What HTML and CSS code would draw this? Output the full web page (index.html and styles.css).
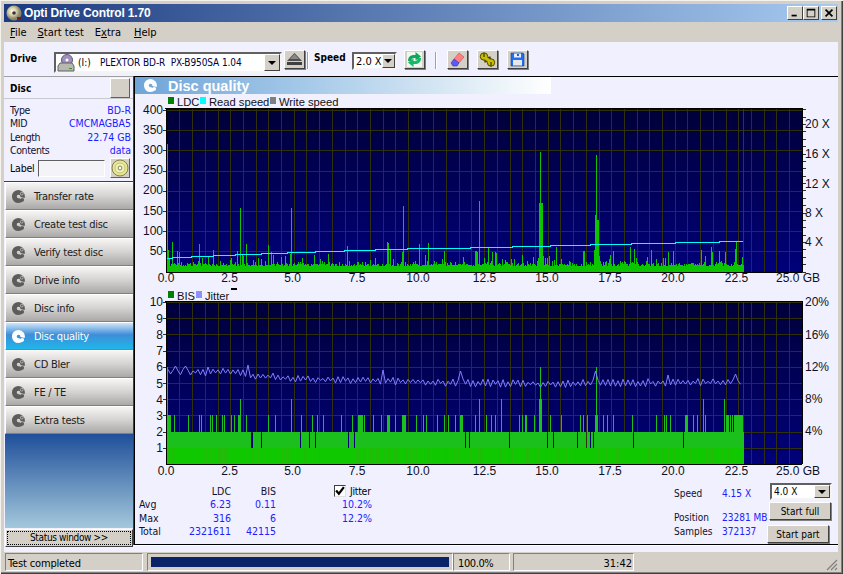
FILE: index.html
```html
<!DOCTYPE html>
<html lang="en">
<head>
<meta charset="utf-8">
<title>Opti Drive Control 1.70</title>
<link rel="stylesheet" href="styles.css">
</head>
<body>
<svg class="defs" width="0" height="0" aria-hidden="true">
  <symbol id="disc" viewBox="0 0 16 16">
    <path fill="currentColor" fill-rule="evenodd" d="M8 1a7 7 0 1 0 0 14c2 0 3.600-.8 4.800-2.100L10 10.500 8.500 9.800a1.900 1.900 0 1 1 1.400-1.400l4.700 1.200A7 7 0 0 0 8 1z"/>
    <circle cx="11.500" cy="5" r="1.500" fill="none" stroke="#f4f4f0" stroke-width=".8" opacity=".7"/>
    <circle cx="12" cy="11.500" r="2" fill="currentColor"/>
  </symbol>
</svg>
<div class="window">
  <header class="titlebar">
    <svg class="app-icon" viewBox="0 0 16 16"><defs><radialGradient id="appdisc" cx=".4" cy=".4"><stop offset="0" stop-color="#fff"/><stop offset=".5" stop-color="#d8d0a8"/><stop offset="1" stop-color="#8a8468"/></radialGradient></defs><circle cx="8" cy="8" r="7.500" fill="url(#appdisc)"/><circle cx="8" cy="8" r="1.800" fill="#333"/><rect x="11" y="12" width="4" height="3" fill="#702020"/></svg>
    <span class="app-name">Opti Drive Control 1.70</span>
    <div class="win-btns">
      <button class="win-btn"><svg viewBox="0 0 16 14"><rect x="4" y="9" width="6" height="2"/></svg></button>
      <button class="win-btn"><svg viewBox="0 0 16 14"><path d="M3 2h10v10H3zM4 4v7h8V4z" fill-rule="evenodd"/></svg></button>
      <button class="win-btn win-close"><svg viewBox="0 0 16 14"><path d="M4 3l8 8M12 3l-8 8" stroke="#000" stroke-width="2" fill="none"/></svg></button>
    </div>
  </header>
  <nav class="menubar">
    <span class="m-file"><u>F</u>ile</span>
    <span class="m-start"><u>S</u>tart test</span>
    <span class="m-extra">E<u>x</u>tra</span>
    <span class="m-help"><u>H</u>elp</span>
  </nav>
  <div class="toolbar">
    <b class="tb-drive">Drive</b>
    <div class="combo drive-combo">
      <svg class="drive-icon" viewBox="0 0 18 18"><circle cx="10" cy="6" r="5.500" fill="#a090c0" stroke="#605878"/><circle cx="10" cy="6" r="1.500" fill="#fff"/><path d="M1 12l2-3h12l2 3v5H1z" fill="#b8b8b0" stroke="#606060"/><rect x="12" y="14" width="3" height="1" fill="#20a020"/></svg>
      <span class="drive-letter">(I:)</span>
      <span class="drive-name">PLEXTOR BD-R  PX-B950SA 1.04</span>
      <span class="combo-arrow"><i></i></span>
    </div>
    <button class="tool-btn eject"><svg viewBox="0 0 17 15"><path d="M8.500 1L16 9H1z" fill="#505050"/><path d="M8.500 2L13 7H4z" fill="#888"/><rect x="1" y="10" width="15" height="3" fill="#404040"/></svg></button>
    <span class="tb-sep s1"></span>
    <b class="tb-speed">Speed</b>
    <div class="combo speed-combo"><span>2.0 X</span><span class="combo-arrow"><i></i></span></div>
    <button class="tool-btn refresh"><svg viewBox="0 0 17 15"><rect x="1" y="0" width="15" height="15" fill="#eef8ee"/><path d="M2 9C2 4.500 5 2.500 9.500 3V0L15 4.500 9.500 8.500V6C7 5.500 5.500 6.500 5 9z" fill="#10a860"/><path d="M15 6c0 4.500-3 6.500-7.500 6v3L2 10.500 7.500 6.500V9c2.500.5 4-.5 4.500-3z" fill="#18b868"/></svg></button>
    <span class="tb-sep s2"></span>
    <button class="tool-btn eraser"><svg viewBox="0 0 17 15"><path d="M10 1l5 4-5 6-5-4z" fill="#ff8080" stroke="#c05050" stroke-width=".6"/><path d="M5 7l5 4-2 3H4L2 11z" fill="#5a5aff" stroke="#3030a0" stroke-width=".6"/></svg></button>
    <button class="tool-btn wrench"><svg viewBox="0 0 17 15"><path d="M5 8.500L12 6.500" stroke="#504800" stroke-width="4.500"/><circle cx="5" cy="4.500" r="3.700" fill="#c8c000" stroke="#504800"/><circle cx="12" cy="10.500" r="3.700" fill="#c8c000" stroke="#504800"/><path d="M6 5.500L11 9.500" stroke="#c8c000" stroke-width="3"/><path d="M5 1v4M12 10v4.500" stroke="#504800" stroke-width="1.400"/></svg></button>
    <button class="tool-btn floppy"><svg viewBox="0 0 17 15"><path d="M2 1h12l1 1v12H2z" fill="#2070f0" stroke="#1040a0" stroke-width=".6"/><rect x="5" y="1.500" width="7" height="4" fill="#e8f0ff"/><rect x="8" y="2" width="2" height="2" fill="#2060d0"/><rect x="4" y="8" width="9" height="5.500" fill="#e8e8e8"/></svg></button>
  </div>
  <div class="workspace">
    <aside class="sidebar">
      <div class="disc-head"><b>Disc</b><button class="plain-btn"></button></div>
      <dl class="disc-info">
        <div><dt>Type</dt><dd>BD-R</dd></div>
        <div><dt>MID</dt><dd>CMCMAGBA5</dd></div>
        <div><dt>Length</dt><dd>22.74 GB</dd></div>
        <div><dt>Contents</dt><dd>data</dd></div>
      </dl>
      <div class="label-row">
        <span>Label</span><span class="label-input"></span>
        <button class="plain-btn disc-btn"><svg viewBox="0 0 18 18"><circle cx="9" cy="9" r="8" fill="#e8e890" stroke="#808050"/><circle cx="9" cy="9" r="5" fill="#f4f4c0" stroke="#c0c070"/><circle cx="9" cy="9" r="2" fill="#fff" stroke="#808050"/></svg></button>
      </div>
      <ul class="nav">
        <li class="nav-btn"><svg class="nav-ic"><use href="#disc"/></svg>Transfer rate</li>
        <li class="nav-btn"><svg class="nav-ic"><use href="#disc"/></svg>Create test disc</li>
        <li class="nav-btn"><svg class="nav-ic"><use href="#disc"/></svg>Verify test disc</li>
        <li class="nav-btn"><svg class="nav-ic"><use href="#disc"/></svg>Drive info</li>
        <li class="nav-btn"><svg class="nav-ic"><use href="#disc"/></svg>Disc info</li>
        <li class="nav-btn active"><svg class="nav-ic"><use href="#disc"/></svg>Disc quality</li>
        <li class="nav-btn"><svg class="nav-ic"><use href="#disc"/></svg>CD Bler</li>
        <li class="nav-btn"><svg class="nav-ic"><use href="#disc"/></svg>FE / TE</li>
        <li class="nav-btn"><svg class="nav-ic"><use href="#disc"/></svg>Extra tests</li>
      </ul>
      <div class="nav-fill"></div>
      <button class="status-btn"><span>Status window &gt;&gt;</span></button>
    </aside>
    <main class="panel">
      <div class="band"><svg class="band-ic"><use href="#disc"/></svg><span>Disc quality</span></div>
      <svg id="chart1" class="chart c1" viewBox="134 95 704 190" width="704" height="190">
        <rect x="168" y="97" width="6" height="7" fill="#008000"/><text class="lg" x="177" y="106">LDC</text>
        <rect x="200" y="97" width="6" height="7" fill="#00ffff"/><text class="lg" x="209" y="106">Read speed</text>
        <rect x="270" y="97" width="6" height="7" fill="#808080"/><text class="lg" x="279" y="106">Write speed</text>
        <g id="plot1"></g>
        <g text-anchor="end">
          <text x="163" y="114">400</text><text x="163" y="134">350</text><text x="163" y="154">300</text><text x="163" y="174">250</text><text x="163" y="194">200</text><text x="163" y="215">150</text><text x="163" y="235">100</text><text x="163" y="255">50</text>
          <text x="820" y="282">25.0 GB</text>
        </g>
        <g text-anchor="middle">
          <text x="166" y="282">0.0</text><text x="229.500" y="282">2.5</text><text x="292.500" y="282">5.0</text><text x="357" y="282">7.5</text><text x="418" y="282">10.0</text><text x="484.500" y="282">12.5</text><text x="547" y="282">15.0</text><text x="610" y="282">17.5</text><text x="673" y="282">20.0</text><text x="736.500" y="282">22.5</text>
        </g>
        <text x="805" y="128">20 X</text><text x="805" y="158">16 X</text><text x="805" y="188">12 X</text><text x="805" y="217">8 X</text><text x="805" y="246">4 X</text>
      </svg>
      <svg id="chart2" class="chart c2" viewBox="134 285 704 195" width="704" height="195">
        <rect x="168" y="291" width="6" height="7" fill="#008000"/><text class="lg" x="177" y="300">BIS</text>
        <rect x="196" y="291" width="6" height="7" fill="#8f8fff"/><text class="lg" x="205" y="300">Jitter</text>
        <rect x="231" y="288" width="6" height="2" fill="#000"/>
        <g id="plot2"></g>
        <g text-anchor="end">
          <text x="163" y="306">10</text><text x="163" y="323">9</text><text x="163" y="339">8</text><text x="163" y="355">7</text><text x="163" y="371">6</text><text x="163" y="388">5</text><text x="163" y="404">4</text><text x="163" y="420">3</text><text x="163" y="436">2</text><text x="163" y="452">1</text>
          <text x="820" y="475">25.0 GB</text>
        </g>
        <g text-anchor="middle">
          <text x="166" y="475">0.0</text><text x="229.500" y="475">2.5</text><text x="292.500" y="475">5.0</text><text x="357" y="475">7.5</text><text x="418" y="475">10.0</text><text x="484.500" y="475">12.5</text><text x="547" y="475">15.0</text><text x="610" y="475">17.5</text><text x="673" y="475">20.0</text><text x="736.500" y="475">22.5</text>
        </g>
        <text x="805" y="306">20%</text><text x="805" y="339">16%</text><text x="805" y="371">12%</text><text x="805" y="403">8%</text><text x="805" y="435">4%</text>
      </svg>
      <section class="stats">
        <div class="stat-table">
          <span></span><span class="hd">LDC</span><span class="hd">BIS</span>
          <span>Avg</span><span class="val">6.23</span><span class="val">0.11</span>
          <span>Max</span><span class="val">316</span><span class="val">6</span>
          <span>Total</span><span class="val">2321611</span><span class="val">42115</span>
        </div>
        <div class="jitter">
          <div class="jit-head"><span class="check"><svg viewBox="0 0 9 9"><path d="M1 4l2.500 3L8 1" fill="none" stroke="#000" stroke-width="2"/></svg></span><span>Jitter</span></div>
          <span class="val">10.2%</span>
          <span class="val">12.2%</span>
        </div>
        <div class="live">
          <span class="live-speed">Speed</span><span class="live-val live-speed">4.15 X</span>
          <span>Position</span><span class="live-val">23281 MB</span>
          <span>Samples</span><span class="live-val">372137</span>
        </div>
        <div class="controls">
          <div class="combo run-combo"><span>4.0 X</span><span class="combo-arrow"><i></i></span></div>
          <button class="run-btn full">Start full</button>
          <button class="run-btn part">Start part</button>
        </div>
      </section>
    </main>
  </div>
  <footer class="statusbar">
    <span class="cell st-text">Test completed</span>
    <span class="cell st-prog"><i></i></span>
    <span class="cell st-pct">100.0%</span>
    <span class="cell st-time">31:42</span>
    <svg class="grip" viewBox="0 0 14 14"><path d="M13 3L3 13M13 7l-6 6M13 11l-2 2" stroke="#808080" stroke-width="1.200" fill="none"/></svg>
  </footer>
</div>
<script src="charts.js"></script>
</body>
</html>
```
FILE: styles.css
```css
* { box-sizing: border-box; }
html, body { margin: 0; padding: 0; }
body { width: 843px; height: 574px; overflow: hidden; font-family: "DejaVu Sans Condensed", "DejaVu Sans", sans-serif; font-stretch: condensed; font-size: 11px; color: #000; }
.defs { position: absolute; }
button { font: inherit; padding: 0; margin: 0; color: inherit; }

.window { width: 843px; height: 574px; padding: 4px 5px 3px 4px; background: #d4d0c8; display: flex; flex-direction: column; box-shadow: inset 1px 1px 0 #f4f2ec, inset -1px -1px 0 #404040, inset -2px -2px 0 #808080; }

.titlebar { height: 18px; flex: none; display: flex; align-items: center; background: linear-gradient(90deg, #1c3a80, #a6caf0); padding-left: 2px; }
.app-icon { width: 16px; height: 16px; margin-right: 2px; }
.app-name { color: #fff; font-family: "Liberation Sans", sans-serif; font-weight: bold; font-size: 12px; letter-spacing: -.15px; }
.win-btns { margin-left: auto; display: flex; margin-right: 1px; }
.win-btn { width: 16px; height: 14px; background: #d4d0c8; border: 1px solid; border-color: #fff #404040 #404040 #fff; display: block; }
.win-btn svg { width: 14px; height: 12px; display: block; }
.win-close { margin-left: 2px; }

.menubar { height: 20px; flex: none; display: flex; align-items: center; font-size: 11px; }
.m-file { margin-left: 6px; }
.m-start { margin-left: 11px; }
.m-extra { margin-left: 11px; }
.m-help { margin-left: 13px; }

.toolbar { height: 34px; flex: none; background: #f0f0ff; display: flex; align-items: flex-start; position: relative; }
.tb-drive { margin: 11px 0 0 6px; width: 44px; font-size: 10px; }
.tb-speed { margin: 10px 0 0 5px; width: 38px; font-size: 10px; }
.combo { background: #fff; border: 2px solid; border-color: #606060 #f4f4f4 #f4f4f4 #606060; display: flex; align-items: center; white-space: pre; position: relative; }
.combo-arrow { margin-left: auto; width: 16px; align-self: stretch; background: #d4d0c8; border: 1px solid; border-color: #fff #404040 #404040 #fff; display: flex; align-items: center; justify-content: center; }
.combo-arrow i { border: 4px solid transparent; border-top: 4px solid #000; border-bottom: 0; }
.drive-combo { width: 228px; height: 21px; margin-top: 10px; font-size: 10px; }
.drive-icon { width: 18px; height: 18px; margin: 0 3px 0 1px; flex: none; }
.drive-letter { width: 22px; }
.drive-name { color: #000040; letter-spacing: -.1px; }
.tool-btn { width: 21px; height: 19px; margin-top: 8px; background: #d4d0c8; border: 1px solid; border-color: #fff #404040 #404040 #fff; box-shadow: 1px 1px 0 #808080; display: block; }
.tool-btn svg { width: 17px; height: 15px; display: block; margin: 1px; }
.eject { margin-left: 2px; }
.tb-sep { width: 2px; height: 17px; margin-top: 10px; background: linear-gradient(90deg, #a0a0a0 50%, #fff 50%); }
.s1 { margin-left: 2px; }
.speed-combo { width: 45px; height: 18px; margin-top: 10px; font-size: 11px; padding-left: 2px; }
.speed-combo .combo-arrow { width: 15px; }
.refresh { margin-left: 7px; }
.s2 { margin-left: 10px; }
.eraser { margin-left: 10px; }
.wrench, .floppy { margin-left: 9px; }

.workspace { height: 476px; flex: none; display: flex; background: #f0f0ff; align-items: flex-start; }
.sidebar { width: 130px; height: 471px; flex: none; display: flex; flex-direction: column; }
.disc-head { height: 23px; flex: none; display: flex; align-items: center; justify-content: space-between; padding: 1px 4px 0 6px; border-top: 1px solid #a0a0a0; border-bottom: 1px solid #c8c8d0; font-size: 10px; }
.plain-btn { width: 20px; height: 20px; background: #d4d0c8; border: 1px solid; border-color: #fff #606060 #606060 #fff; display: block; }
.disc-info { margin: 4px 0 0; padding: 0 3px 0 6px; }
.disc-info div { height: 13.500px; display: flex; justify-content: space-between; align-items: center; }
.disc-info dt { color: #101030; font-size: 10.500px; letter-spacing: -.4px; }
.disc-info dd { margin: 0; color: #2020ff; font-size: 10.500px; }
.label-row { height: 22px; padding: 0 3px 0 6px; display: flex; align-items: center; flex: none; font-size: 10.500px; letter-spacing: -.2px; }
.label-input { width: 67px; height: 17px; margin-left: 3px; background: #f4f4f8; border: 1px solid; border-color: #606060 #fff #fff #606060; }
.disc-btn { margin-left: 5px; }
.disc-btn svg { width: 18px; height: 18px; display: block; }
.nav { list-style: none; margin: 2px 0 0; padding: 0; border-top: 1px solid #404040; }
.nav-btn { height: 28px; margin-left: 1px; display: flex; align-items: center; padding-left: 5px; background: linear-gradient(#f6f5f3, #d8d7d5 45%, #aaa9a7); border: 1px solid; border-color: #fff #808080 #808080 #fff; color: #202020; font-size: 11px; letter-spacing: -.25px; }
.nav-btn.active { background: linear-gradient(#cfe6fa, #3e8ed8 45%, #1fb6ea); color: #fff; }
.nav-ic { width: 15px; height: 15px; margin-right: 8px; color: #5c5c5c; flex: none; }
.active .nav-ic { color: #fff; }
.nav-fill { flex: 1; margin-left: 1px; background: linear-gradient(#1f4f9a, #a4c8dc); border-right: 1px solid #808080; }
.status-btn { height: 18px; margin: 1px 1px 0 1px; background: #d4d0c8; border: 1px solid; border-color: #fff #404040 #404040 #fff; padding: 1px; flex: none; }
.status-btn span { display: block; height: 14px; line-height: 12px; border: 1px dotted #000; font-size: 10px; letter-spacing: -.35px; }

.panel { flex: 1; height: 469px; border-top: 1px solid #000; border-left: 1px solid #000; border-bottom: 1px solid #000; display: flex; flex-direction: column; box-shadow: -1px 0 0 #404040, 0 1px 0 #fff; overflow: hidden; }
.band { width: 416px; height: 17px; flex: none; margin-bottom: 1px; background: linear-gradient(90deg, #6fa5d8, #a4c8e8 40%, #d8e8f4 75%, #fff); color: #fff; display: flex; align-items: center; padding-left: 8px; font-family: "Liberation Sans", sans-serif; font-weight: bold; font-size: 14.500px; }
.band-ic { width: 15px; height: 15px; margin-right: 10px; color: #fff; }
.chart { display: block; flex: none; margin-left: -1px; }
.chart text { font-family: "Liberation Sans", sans-serif; font-size: 12px; fill: #101020; }
.chart text.lg { font-size: 11.200px; }

.stats { flex: 1; display: flex; align-items: flex-start; position: relative; }
.stat-table { display: grid; grid-template-columns: 50px 42px 45px; grid-auto-rows: 13.500px; align-items: center; margin: 4px 0 0 4px; font-size: 10.500px; color: #101030; }
.hd { text-align: right; }
.val { text-align: right; color: #2020ff; }
.jitter { margin: 4px 0 0 58px; width: 38px; display: grid; grid-template-columns: 38px; grid-auto-rows: 13.500px; align-items: center; font-size: 10.500px; }
.jit-head { display: flex; align-items: center; width: 46px; white-space: nowrap; letter-spacing: -.3px; }
.check { width: 12px; height: 12px; background: #fff; border: 1px solid; border-color: #404040 #e0e0e0 #e0e0e0 #404040; margin-right: 4px; display: block; flex: none; }
.check svg { display: block; width: 10px; height: 10px; }
.live { margin: 7px 0 0 auto; display: grid; grid-template-columns: 48px 45px; grid-template-rows: 24px 13.500px 13.500px; font-size: 10px; color: #101030; line-height: 13.500px; white-space: nowrap; }
.live-val { color: #2020ff; }
.controls { margin: 3px 6px 0 0; width: 65px; display: flex; flex-direction: column; font-size: 10px; }
.run-combo { width: 62px; height: 17px; margin-left: 3px; padding-left: 2px; }
.run-btn { height: 18px; background: #d4d0c8; border: 1px solid; border-color: #fff #404040 #404040 #fff; box-shadow: 1px 1px 0 #808080; }
.full { margin: 2px 0 0 2px; width: 62px; }
.part { margin-top: 5px; width: 62px; }

.statusbar { flex: 1; display: flex; align-items: stretch; gap: 0; padding: 1px 0 0 1px; font-size: 11px; position: relative; }
.cell { border: 1px solid; border-color: #808080 #fff #fff #808080; display: flex; align-items: center; height: 18px; padding-top: 2px; }
.st-text { width: 138px; padding-left: 2px; letter-spacing: -.15px; }
.st-prog { width: 306px; margin-left: 4px; padding: 3px 3px; }
.st-prog i { display: block; width: 100%; height: 100%; background: #0a246a; }
.st-pct { width: 57px; padding-left: 4px; letter-spacing: -.4px; }
.st-time { width: 121px; margin-left: 3px; justify-content: flex-end; padding-right: 1px; }
.grip { position: absolute; right: 0; bottom: 0; width: 14px; height: 14px; }
```
FILE: charts.js
```js
(function () {
  var NS = 'http://www.w3.org/2000/svg';
  var seed = 20481;
  function rnd() {
    seed = (seed + 0x6D2B79F5) | 0;
    var t = Math.imul(seed ^ (seed >>> 15), 1 | seed);
    t = (t + Math.imul(t ^ (t >>> 7), 61 | t)) ^ t;
    return ((t ^ (t >>> 14)) >>> 0) / 4294967296;
  }
  function el(parent, name, attrs) {
    var e = document.createElementNS(NS, name);
    for (var k in attrs) e.setAttribute(k, attrs[k]);
    parent.appendChild(e);
    return e;
  }
  function frame(id, gid, top, bottom, hLines) {
    var svg = document.getElementById('chart' + id);
    var g = document.getElementById(gid);
    var defs = el(g, 'defs', {});
    var lg = el(defs, 'linearGradient', { id: 'bg' + id, x1: 0, y1: 0, x2: 0, y2: 1 });
    el(lg, 'stop', { offset: 0, 'stop-color': '#00003a' });
    el(lg, 'stop', { offset: 1, 'stop-color': '#00007a' });
    el(g, 'rect', { x: 166, y: top, width: 636, height: bottom - top, fill: 'url(#bg' + id + ')' });
    var d = '', i;
    for (i = 1; i < 50; i++) { d += 'M' + (Math.round(166.7 + 12.7 * i) + 0.5) + ' ' + top + 'V' + bottom; }
    hLines.forEach(function (y) { d += 'M166 ' + (Math.round(y) + 0.5) + 'H802'; });
    el(g, 'path', { d: d, stroke: '#30300c', 'stroke-width': 1, fill: 'none', 'shape-rendering': 'crispEdges' });
    el(g, 'path', { d: 'M743.500 ' + top + 'V' + bottom, stroke: '#800080', fill: 'none', 'shape-rendering': 'crispEdges' });
    return { svg: svg, g: g };
  }
  function border(g, top, bottom) {
    el(g, 'path', { d: 'M166.500 ' + top + 'V' + bottom + 'H802M165 ' + (top + .5) + 'H802.500V' + bottom, stroke: '#000', 'stroke-width': 1, fill: 'none', 'shape-rendering': 'crispEdges' });
  }

  /* ---------- upper chart: LDC and read speed ---------- */
  var top1 = 108, bot1 = 272, hs1 = [], i;
  for (i = 0; i < 8; i++) hs1.push(110 + i * 20.2);
  var f1 = frame(1, 'plot1', top1, bot1, hs1);
  var heights = {};
  for (var x = 167; x <= 743; x++) {
    var r = rnd(), y = 264 + Math.floor(rnd() * 3);
    if (r > .62) y -= 1 + Math.floor(rnd() * 3);
    if (r > .88) y -= 3 + Math.floor(rnd() * 6);
    heights[x] = y;
  }
  [[167, 144], [168, 250], [172, 242], [177, 251], [179, 252], [199, 244], [213, 250], [240, 208], [237, 251], [246, 244], [268, 245], [271, 252], [291, 208],
   [347, 246], [387, 242], [388, 243], [390, 249], [403, 206], [402, 252], [419, 244], [428, 243], [444, 251], [475, 251], [476, 251], [477, 252], [479, 201], [488, 248], [492, 252], [495, 252], [496, 253], [505, 260],
   [539, 203], [540, 152], [541, 203], [542, 203], [538, 258], [543, 256], [556, 247], [583, 251], [584, 251], [595, 215], [596, 155], [597, 220], [598, 220], [594, 250], [599, 256], [613, 251], [630, 247], [634, 249], [651, 250], [668, 252], [673, 251], [701, 250], [711, 247], [712, 252], [719, 251], [725, 252], [735, 249], [736, 242]
  ].forEach(function (p) { heights[p[0]] = p[1]; });
  var d1 = '';
  for (x = 167; x <= 743; x++) d1 += 'M' + (x + .5) + ' ' + heights[x] + 'V272';
  el(f1.g, 'path', { d: d1, stroke: '#0cc400', fill: 'none', 'shape-rendering': 'crispEdges' });
  var cyan = 'M167 258.500';
  [[172, 257], [191, 256], [213, 255], [235, 254], [261, 253], [287, 252], [315, 251], [344, 250], [375, 249], [407, 248], [470, 247], [512, 246], [550, 245], [590, 244], [631, 243], [675, 242], [719, 241]].forEach(function (s) {
    cyan += 'H' + s[0] + 'V' + (s[1] + .5);
  });
  cyan += 'H743';
  el(f1.g, 'path', { d: cyan, stroke: '#00ffff', fill: 'none', 'shape-rendering': 'crispEdges' });
  var ticks = '';
  for (i = 0; i <= 22; i++) ticks += 'M802 ' + (Math.round(271.5 - i * 7.37) + .5) + 'h4';
  hs1.forEach(function (y) { ticks += 'M163 ' + (Math.round(y) + .5) + 'h3'; });
  el(f1.g, 'path', { d: ticks, stroke: '#303030', fill: 'none', 'shape-rendering': 'crispEdges' });
  border(f1.g, top1, bot1);

  /* ---------- lower chart: BIS and jitter ---------- */
  var top2 = 301, bot2 = 464, hs2 = [];
  for (i = 0; i < 10; i++) hs2.push(302 + i * 16.2);
  var f2 = frame(2, 'plot2', top2, bot2, hs2);
  var lvl = {};
  for (x = 167; x <= 743; x++) lvl[x] = 2;
  var threes = [168, 169, 170, 174, 188, 199, 201, 210, 212, 216, 222, 224, 231, 234, 238, 239, 240, 246, 268, 275, 301, 309, 312, 317, 323, 341, 352, 358, 359, 360, 361, 362, 364, 373, 381, 387, 388, 389, 395, 402, 403, 404, 405, 416, 423, 426, 437, 444, 448, 455, 460, 461, 462, 475, 486, 491, 495,
    519, 522, 525, 526, 534, 550, 561, 580, 583, 587, 603, 607, 613, 632, 656, 664, 666, 670, 685, 686, 687, 693, 697, 705, 726, 727, 728, 730, 732];
  threes.forEach(function (v) { lvl[v] = 3; });
  for (x = 734; x <= 742; x++) lvl[x] = 3;
  [[167, 6], [240, 4], [291, 4], [479, 4], [501, 4], [539, 4], [540, 6], [541, 4], [596, 6], [595, 3], [597, 3], [703, 4], [724, 4]].forEach(function (p) { lvl[p[0]] = p[1]; });
  [251, 252, 261, 300, 309, 315, 348, 354, 465, 469, 509, 547, 553, 577, 586, 590, 593, 633, 683].forEach(function (v) { lvl[v] = 1; });
  var d2a = '';
  var unit = 16.2;
  for (x = 167; x <= 743; x++) {
    var yTop = Math.round(464 - lvl[x] * unit);
    d2a += 'M' + (x + .5) + ' ' + yTop + 'V448';
  }
  el(f2.g, 'path', { d: d2a, stroke: '#1cc01c', fill: 'none', 'shape-rendering': 'crispEdges' });
  for (x = 167; x <= 743; x++) {
    var c = rnd() > .8 ? '#20bc08' : '#10c800';
    el(f2.g, 'path', { d: 'M' + (x + .5) + ' 448V464', stroke: c, fill: 'none', 'shape-rendering': 'crispEdges' });
  }
  var knots = [[167, 372], [230, 372], [260, 376], [300, 379], [350, 380], [430, 382], [540, 384], [600, 383], [741, 382]];
  function base(px) {
    for (var k = 0; k < knots.length - 1; k++) {
      if (px <= knots[k + 1][0]) {
        var a = knots[k], b = knots[k + 1];
        return a[1] + (b[1] - a[1]) * (px - a[0]) / (b[0] - a[0]);
      }
    }
    return 382;
  }
  var pts = [];
  var peaks = { 175: 366, 186: 366, 208: 367, 247: 365, 382: 370, 461: 371, 595: 371, 667: 375, 736: 374 };
  var odd = false;
  for (x = 168; x <= 741; x += 2.5) {
    odd = !odd;
    var jy = base(x) + (odd ? -1 : 1) * (0.8 + rnd() * 3.2);
    for (var pk in peaks) { if (Math.abs(pk - x) < 1.3) jy = peaks[pk]; }
    pts.push(x + ',' + jy.toFixed(1));
  }
  el(f2.g, 'polyline', { points: pts.join(' '), fill: 'none', stroke: '#8080ff', 'stroke-width': 1 });
  var t2 = '';
  hs2.forEach(function (y) { t2 += 'M163 ' + (Math.round(y) + .5) + 'h3'; });
  el(f2.g, 'path', { d: t2, stroke: '#303030', fill: 'none', 'shape-rendering': 'crispEdges' });
  border(f2.g, top2, bot2);
})();
```
